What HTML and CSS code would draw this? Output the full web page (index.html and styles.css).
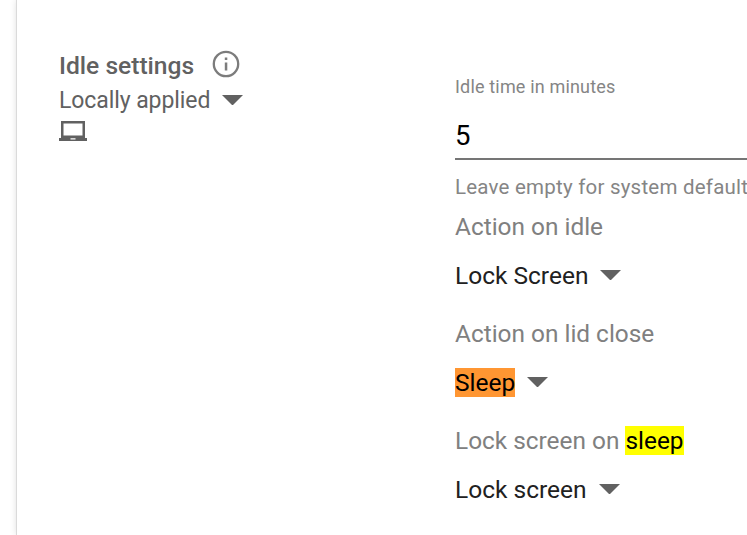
FILE: index.html
```html
<!DOCTYPE html>
<html lang="en">
<head>
<meta charset="utf-8">
<title>Idle settings</title>
<link rel="stylesheet" href="styles.css">
</head>
<body>
<main class="card">
  <section class="summary">
    <h2 class="title">Idle settings
      <svg class="info" viewBox="0 0 28 28"><circle cx="14" cy="14" r="12.2" fill="none" stroke="currentColor" stroke-width="2.3"/><path d="M12.8 12.5h2.5v8h-2.5zM12.8 7.5h2.5V10h-2.5z" fill="currentColor"/></svg>
    </h2>
    <div class="scope">Locally applied <i class="caret"></i></div>
    <svg class="laptop" viewBox="0 0 28 22"><path fill-rule="evenodd" d="M2 1h24v17h2v3H0v-3h2zM4.5 3.5v12h19v-12zM11.5 18.2v1.2h5v-1.2z" fill="currentColor"/></svg>
  </section>
  <section class="fields">
    <label class="caption">Idle time in minutes</label>
    <div class="input">5</div>
    <div class="hint">Leave empty for system default</div>
    <div class="label">Action on idle</div>
    <div class="select">Lock Screen <i class="caret"></i></div>
    <div class="label">Action on lid close</div>
    <div class="select"><mark class="current">Sleep</mark> <i class="caret"></i></div>
    <div class="label">Lock screen on <mark>sleep</mark></div>
    <div class="select">Lock screen <i class="caret"></i></div>
  </section>
</main>
</body>
</html>
```
FILE: styles.css
```css
* { box-sizing: border-box; }
body { margin: 0; height: 535px; overflow: hidden; background: #fff; font-family: Roboto, sans-serif; padding-left: 17px; }
.card { height: 535px; display: flex; background: #fff; box-shadow: -1px 0 0 #dadada, 0 0 7px rgba(0,0,0,.16); white-space: nowrap; }
.summary { width: 438px; flex: none; padding: 50px 0 0 42px; color: #616161; }
.title { display: flex; align-items: center; gap: 18px; margin: 0; height: 30px; font-size: 24.6px; font-weight: 500; }
.info { width: 28px; height: 28px; color: #7c7c7c; margin-top: -3px; }
.scope { display: flex; align-items: center; gap: 12px; height: 40px; font-size: 23px; letter-spacing: -.08px; }
.caret { border: 10.5px solid transparent; border-top-color: #616161; border-bottom: 0; width: 21px; }
.laptop { display: block; width: 28px; height: 22px; }
.fields { width: 292px; flex: none; padding-top: 76px; color: #212121; }
.caption { display: block; height: 22px; line-height: 22px; font-size: 18px; letter-spacing: .17px; color: #858585; }
.input { height: 62px; padding-top: 20px; line-height: 36px; font-size: 27.5px; color: #000; border-bottom: 2px solid #757575; }
.hint { height: 53px; line-height: 54px; font-size: 20.5px; letter-spacing: .22px; color: #858585; }
.label { height: 28px; line-height: 28px; font-size: 24.4px; color: #808080; }
.select { display: flex; align-items: center; gap: 12px; height: 79px; padding-bottom: 10px; font-size: 24.5px; }
.select .caret { margin-top: -1px; }
mark { background: #ff0; color: #000; }
.current { background: #ff9632; }
```
